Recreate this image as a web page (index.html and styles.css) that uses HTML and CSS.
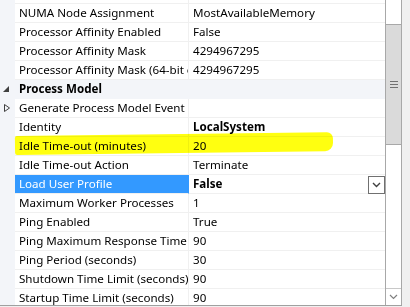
FILE: index.html
```html
<!DOCTYPE html>
<html lang="en">
<head>
<meta charset="UTF-8">
<title>Properties</title>
<link rel="stylesheet" href="styles.css">
</head>
<body>
<div class="window">
    <div class="grid-box">
        <div class="props">
            <div class="rows">
                <div class="row">
                    <div class="gutter"></div>
                    <div class="name"></div>
                    <div class="value"></div>
                </div>
                <div class="row">
                    <div class="gutter"></div>
                    <div class="name">NUMA Node Assignment</div>
                    <div class="value">MostAvailableMemory</div>
                </div>
                <div class="row">
                    <div class="gutter"></div>
                    <div class="name">Processor Affinity Enabled</div>
                    <div class="value">False</div>
                </div>
                <div class="row">
                    <div class="gutter"></div>
                    <div class="name">Processor Affinity Mask</div>
                    <div class="value">4294967295</div>
                </div>
                <div class="row">
                    <div class="gutter"></div>
                    <div class="name"><span>Processor Affinity Mask (64-bit option)</span></div>
                    <div class="value">4294967295</div>
                </div>
                <div class="row category">
                    <div class="gutter">
                        <svg width="15" height="18" viewBox="0 0 15 18"><path d="M9 6 L9 12 L3 12 Z" fill="#404040"/></svg>
                    </div>
                    <div class="cat-title">Process Model</div>
                </div>
                <div class="row">
                    <div class="gutter">
                        <svg width="15" height="18" viewBox="0 0 15 18"><path d="M4.5 5.5 L9.5 9 L4.5 12.5 Z" fill="none" stroke="#404040"/></svg>
                    </div>
                    <div class="name"><span>Generate Process Model Event Log Entry</span></div>
                    <div class="value"></div>
                </div>
                <div class="row">
                    <div class="gutter"></div>
                    <div class="name">Identity</div>
                    <div class="value bold">LocalSystem</div>
                </div>
                <div class="row marked">
                    <div class="gutter"></div>
                    <div class="name">Idle Time-out (minutes)</div>
                    <div class="value">20</div>
                    <span class="marker"></span>
                </div>
                <div class="row">
                    <div class="gutter"></div>
                    <div class="name">Idle Time-out Action</div>
                    <div class="value">Terminate</div>
                </div>
                <div class="row selected">
                    <div class="gutter"></div>
                    <div class="name">Load User Profile</div>
                    <div class="value bold">
                        False
                        <span class="drop-btn">
                            <svg width="9" height="6" viewBox="0 0 9 6"><path d="M1 1 L4.5 4.5 L8 1" fill="none" stroke="#404040" stroke-width="1.4"/></svg>
                        </span>
                    </div>
                </div>
                <div class="row">
                    <div class="gutter"></div>
                    <div class="name">Maximum Worker Processes</div>
                    <div class="value">1</div>
                </div>
                <div class="row">
                    <div class="gutter"></div>
                    <div class="name">Ping Enabled</div>
                    <div class="value">True</div>
                </div>
                <div class="row">
                    <div class="gutter"></div>
                    <div class="name"><span>Ping Maximum Response Time (seconds)</span></div>
                    <div class="value">90</div>
                </div>
                <div class="row">
                    <div class="gutter"></div>
                    <div class="name">Ping Period (seconds)</div>
                    <div class="value">30</div>
                </div>
                <div class="row">
                    <div class="gutter"></div>
                    <div class="name">Shutdown Time Limit (seconds)</div>
                    <div class="value">90</div>
                </div>
                <div class="row">
                    <div class="gutter"></div>
                    <div class="name">Startup Time Limit (seconds)</div>
                    <div class="value">90</div>
                </div>
            </div>
        </div>
        <div class="scrollbar">
            <div class="track-top"></div>
            <div class="thumb">
                <svg width="8" height="7" viewBox="0 0 8 7"><path d="M0 0.5 H8 M0 3.5 H8 M0 6.5 H8" stroke="#707070"/></svg>
            </div>
            <div class="track"></div>
            <div class="arrow-down">
                <svg width="9" height="6" viewBox="0 0 9 6"><path d="M1 1 L4.5 4.5 L8 1" fill="none" stroke="#808080" stroke-width="1.2"/></svg>
            </div>
        </div>
    </div>
</div>
</body>
</html>
```

FILE: styles.css
```css
body {
    margin: 0;
    overflow: hidden;
    font-family: "Noto Sans", "DejaVu Sans", sans-serif;
    font-size: 11.6px;
    color: #000;
}

.window {
    width: 410px;
    height: 307px;
    background-color: #f0f0f0;
}

.grid-box {
    display: flex;
    width: 402px;
    height: 305px;
    border-bottom: 1px solid #a0a0a0;
    background-color: #fff;
}

.props {
    width: 385px;
    overflow: hidden;
}

.rows {
    margin-top: -15px;
}

.row {
    display: flex;
    height: 19px;
    position: relative;
}

.gutter {
    width: 15px;
    flex-shrink: 0;
    background-color: #f3f5f9;
}

.gutter svg {
    display: block;
}

.name {
    width: 169px;
    flex-shrink: 0;
    padding-left: 4px;
    line-height: 18px;
    white-space: nowrap;
    overflow: hidden;
    border-bottom: 1px solid #f0f0f0;
    border-right: 1px solid #f0f0f0;
}

.name span {
    display: block;
    width: 169px;
    overflow: hidden;
}

.value {
    flex: 1;
    display: flex;
    padding-left: 4px;
    line-height: 18px;
    white-space: nowrap;
    border-bottom: 1px solid #f0f0f0;
}

.bold {
    font-weight: bold;
}

.category {
    background-color: #f3f5f9;
}

.cat-title {
    padding-left: 4px;
    line-height: 18px;
    font-weight: bold;
}

.selected .name {
    background-color: #3399ff;
    color: #fff;
    border-right-color: #3399ff;
}

.drop-btn {
    margin-left: auto;
    width: 15px;
    height: 16px;
    margin-top: 1px;
    border: 1px solid #707070;
    background-color: #fff;
    display: flex;
    align-items: center;
    justify-content: center;
}

/* hand-drawn highlighter stroke over the row */
.marker {
    position: absolute;
    left: 15px;
    top: -1px;
    width: 318px;
    height: 19px;
    background-color: #ffff10;
    mix-blend-mode: multiply;
    border-radius: 2px 6px 8px 2px;
    transform: rotate(-0.7deg);
    transform-origin: left center;
}

.scrollbar {
    width: 15px;
    border-left: 1px solid #a8a8a8;
    border-right: 1px solid #a8a8a8;
    display: flex;
    flex-direction: column;
}

.track-top {
    height: 24px;
}

.thumb {
    height: 119px;
    background-color: #dadada;
    border: 1px solid #a8a8a8;
    border-left: none;
    border-right: none;
    display: flex;
    align-items: center;
    justify-content: center;
}

.track {
    flex: 1;
}

.arrow-down {
    height: 16px;
    border-top: 1px solid #c8c8c8;
    display: flex;
    align-items: center;
    justify-content: center;
}
```
